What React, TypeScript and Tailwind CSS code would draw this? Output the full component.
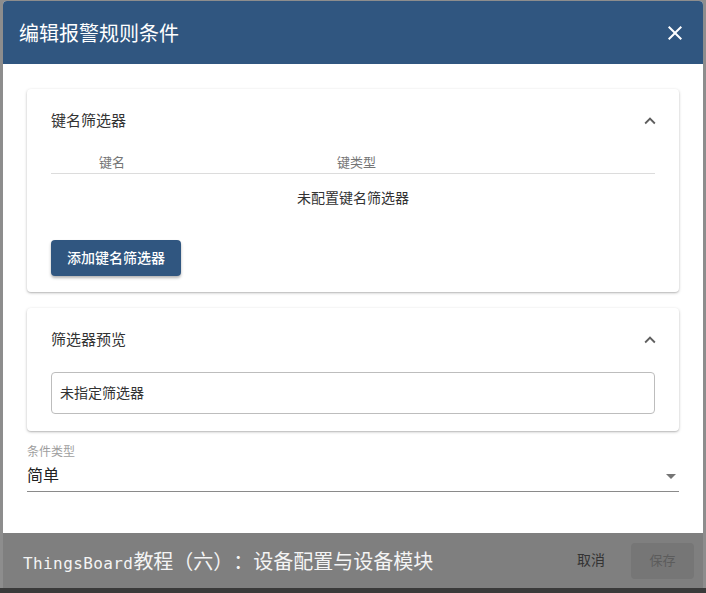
import React from 'react';

const ExpandLess = () => (
  <svg viewBox="0 0 24 24" className="w-[22px] h-[22px] fill-[#5f5f5f]">
    <path d="M12 8l-6 6 1.41 1.41L12 10.83l4.59 4.58L18 14z" />
  </svg>
);

const CloseIcon = () => (
  <svg viewBox="0 0 24 24" className="w-[24px] h-[24px] fill-white">
    <path d="M19 6.41L17.59 5 12 10.59 6.41 5 5 6.41 10.59 12 5 17.59 6.41 19 12 13.41 17.59 19 19 17.59 13.41 12z" />
  </svg>
);

const CardHeader: React.FC<{ title: string }> = ({ title }) => (
  <div className="h-16 flex items-center justify-between pl-6 pr-[18px]">
    <span className="text-[15px] text-[#333] pt-px">{title}</span>
    <ExpandLess />
  </div>
);

export default function App() {
  return (
    <div
      className="w-[706px] h-[593px] bg-[#8d8d8d] flex flex-col overflow-hidden"
      style={{ fontFamily: "Roboto, 'Noto Sans CJK SC', sans-serif" }}
    >
      <div className="mt-px ml-[3px] w-[700px] h-[587px] flex flex-col bg-white rounded-t-[4px] overflow-hidden">
        {/* title bar */}
        <header className="h-[63px] flex-none bg-[#305680] flex items-center justify-between pl-4 pr-[16px]">
          <h2 className="text-[20px] text-white leading-none pt-[2px]">编辑报警规则条件</h2>
          <CloseIcon />
        </header>

        {/* body */}
        <div className="flex-1 px-6 pt-[25px] flex flex-col">
          <section className="rounded-[4px] bg-white shadow-[0_1px_3px_rgba(0,0,0,0.25),0_1px_1px_rgba(0,0,0,0.08)]">
            <CardHeader title="键名筛选器" />
            <div className="px-6 pb-4">
              <div className="h-[21px] flex items-center border-b border-[#dcdcdc] text-[13px] text-[#757575]">
                <span className="pl-12 w-[286px]">键名</span>
                <span>键类型</span>
              </div>
              <div className="h-12 flex items-center justify-center text-[14px] text-[#333]">未配置键名筛选器</div>
              <button className="mt-[18px] h-9 px-4 rounded-[4px] bg-[#305680] text-white text-[14px] font-medium shadow-[0_2px_3px_rgba(0,0,0,0.3)]">
                添加键名筛选器
              </button>
            </div>
          </section>

          <section className="mt-4 rounded-[4px] bg-white shadow-[0_1px_3px_rgba(0,0,0,0.25),0_1px_1px_rgba(0,0,0,0.08)]">
            <CardHeader title="筛选器预览" />
            <div className="px-6 pb-[17px]">
              <div className="h-[42px] border border-[#bdbdbd] rounded-[4px] flex items-center px-2 text-[14px] text-[#333]">
                未指定筛选器
              </div>
            </div>
          </section>

          <div className="mt-[14px] border-b border-[#8a8a8a] pb-[5px]">
            <div className="text-[12px] leading-[14px] text-[#9e9e9e]">条件类型</div>
            <div className="mt-[7px] h-5 flex items-center justify-between">
              <span className="text-[16px] text-[#222]">简单</span>
              <span className="mr-[3px] w-0 h-0 border-l-[5px] border-r-[5px] border-t-[5px] border-l-transparent border-r-transparent border-t-[#757575]" />
            </div>
          </div>
        </div>

        {/* action bar under a caption overlay */}
        <div className="h-[55px] flex-none bg-[#7f7f7f] flex items-center pl-5 pr-[9px]">
          <span className="text-[#f4f4f4] flex items-baseline pt-[1px]">
            <span className="text-[16px] tracking-[0.4px]" style={{ fontFamily: "'DejaVu Sans Mono', monospace" }}>ThingsBoard</span>
            <span
              className="text-[20px]"
              style={{ fontFamily: "'Noto Sans CJK SC', sans-serif", textSpacingTrim: 'space-all' } as React.CSSProperties}
            >
              教程（六）：设备配置与设备模块
            </span>
          </span>
          <span className="ml-auto text-[14px] text-[#333]">取消</span>
          <button className="ml-[26px] w-[63px] h-9 rounded-[4px] bg-[#767676] text-[13px] text-[#5c5c5c]">保存</button>
        </div>
      </div>
      <div className="flex-1 bg-[#3a3a3a]" />
    </div>
  );
}
